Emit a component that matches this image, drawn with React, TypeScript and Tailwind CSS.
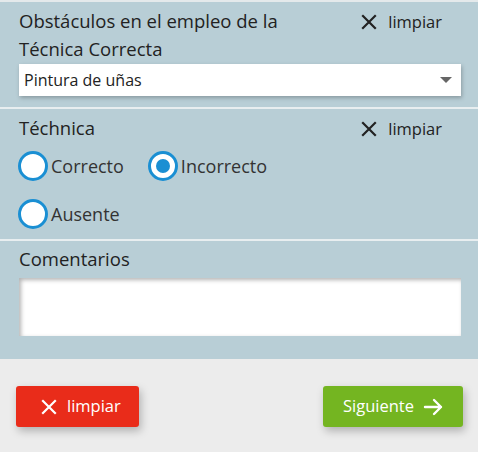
import React, { useState } from 'react';

const font = { fontFamily: '"Open Sans", "Noto Sans", sans-serif' };

const XIcon = ({ className = '' }: { className?: string }) => (
    <svg viewBox="0 0 16 16" className={className} fill="none" stroke="currentColor" strokeWidth={2.2} strokeLinecap="square">
        <path d="M2 2 L14 14 M14 2 L2 14" />
    </svg>
);

const ClearLink = () => (
    <button className="flex items-center gap-[11px] text-[16.5px] text-[#222] mt-[3px] mr-[36px]">
        <XIcon className="w-[16px] h-[16px]" />
        <span>limpiar</span>
    </button>
);

const Radio = ({ label, checked, onClick }: { label: string; checked: boolean; onClick: () => void }) => (
    <button onClick={onClick} className="flex items-center h-[30px] text-[18px] text-[#333]">
        <span className="w-[30px] h-[30px] rounded-full border-[3px] border-[#1a8fd3] bg-white flex items-center justify-center">
            {checked && <span className="w-[14px] h-[14px] rounded-full bg-[#1a8fd3]" />}
        </span>
        <span className="ml-[3px]">{label}</span>
    </button>
);

export default function App() {
    const [tecnica, setTecnica] = useState('Incorrecto');

    return (
        <div className="w-[478px] h-[452px] bg-[#ececec] overflow-hidden" style={font}>
            <div className="h-[2px] bg-[#e4e9eb]" />
            <div className="bg-[#b8ced6]">
                {/* Obstáculos */}
                <div className="pl-[19px] pt-[5px] pb-[11px]">
                    <div className="flex justify-between items-start">
                        <div className="text-[18.5px] leading-[28px] text-[#222]">
                            Obstáculos en el empleo de la<br />Técnica Correcta
                        </div>
                        <ClearLink />
                    </div>
                    <div className="mt-[1px] mr-[17px] h-[32px] bg-white shadow-[1px_2px_4px_rgba(0,0,0,0.25)] flex items-center justify-between pl-[5px] pr-[9px]">
                        <span className="text-[16px] text-[#222]">Pintura de uñas</span>
                        <span className="w-0 h-0 border-l-[6px] border-r-[6px] border-t-[6px] border-l-transparent border-r-transparent border-t-[#666]" />
                    </div>
                </div>
                <div className="h-[2px] bg-[#e8eef0]" />

                {/* Téchnica */}
                <div className="pl-[18px] pt-[5px] pb-[10px]">
                    <div className="flex justify-between items-start">
                        <div className="text-[18.5px] leading-[28px] text-[#222] pl-[1px]">Téchnica</div>
                        <ClearLink />
                    </div>
                    <div className="mt-[9px] flex flex-wrap gap-x-[24px] gap-y-[18px] w-[300px]">
                        {['Correcto', 'Incorrecto', 'Ausente'].map((o) => (
                            <Radio key={o} label={o} checked={tecnica === o} onClick={() => setTecnica(o)} />
                        ))}
                    </div>
                </div>
                <div className="h-[2px] bg-[#e8eef0]" />

                {/* Comentarios */}
                <div className="pl-[19px] pr-[17px] pt-[4px] pb-[23px]">
                    <div className="text-[18.5px] leading-[28px] text-[#222]">Comentarios</div>
                    <textarea className="mt-[5px] block w-full h-[58px] bg-white resize-none outline-none shadow-[inset_2px_2px_4px_rgba(0,0,0,0.3)]" />
                </div>
            </div>

            {/* Buttons */}
            <div className="flex justify-between pt-[27px] pl-[16px] pr-[15px]">
                <button className="w-[123px] h-[41px] rounded-[3px] bg-[#e92c1a] text-white text-[16.5px] flex items-center pl-[25px] gap-[10px] shadow-[2px_4px_8px_rgba(0,0,0,0.25)]">
                    <XIcon className="w-[16px] h-[16px]" />
                    <span>limpiar</span>
                </button>
                <button className="w-[140px] h-[41px] rounded-[3px] bg-[#74b521] text-white text-[16.5px] flex items-center justify-center gap-[9px] shadow-[2px_4px_8px_rgba(0,0,0,0.25)]">
                    <span>Siguiente</span>
                    <svg viewBox="0 0 20 20" className="w-[20px] h-[20px]" fill="none" stroke="currentColor" strokeWidth={2.4} strokeLinecap="round" strokeLinejoin="round">
                        <path d="M2 10 H18 M11 3 L18 10 L11 17" />
                    </svg>
                </button>
            </div>
        </div>
    );
}
